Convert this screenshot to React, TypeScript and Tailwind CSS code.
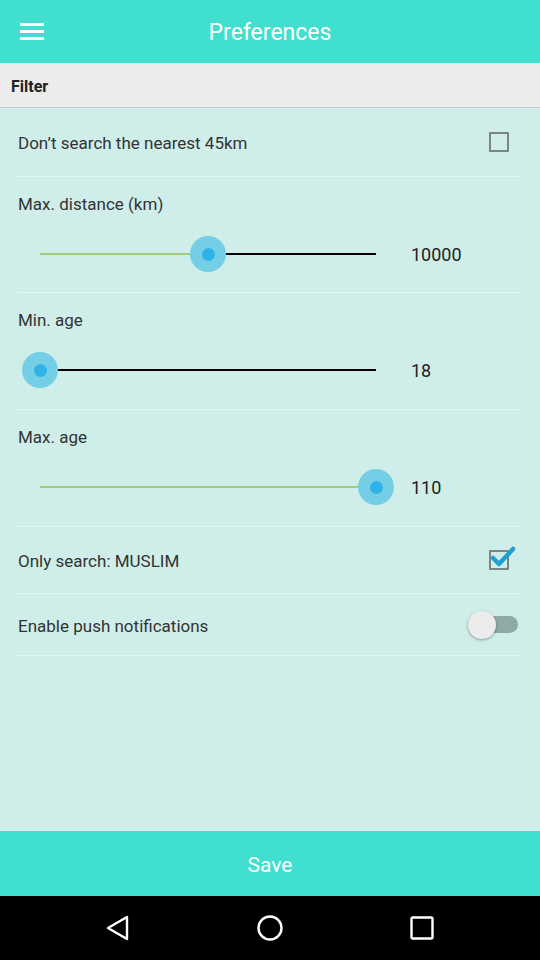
import React from "react";

const Divider = () => <div className="h-px bg-[#e3f5f2]" />;

const Checkbox = ({ checked }: { checked?: boolean }) => (
  <div className="relative w-[20px] h-[20px] border-2 border-[#7b8684] rounded-[1px]">
    {checked && (
      <svg className="absolute -top-[8px] -left-[1px]" width="26" height="26" viewBox="0 0 26 26">
        <path d="M3 14 L9 20 L23 5" fill="none" stroke="#1f9fd5" strokeWidth="4.5" strokeLinecap="round" strokeLinejoin="round" />
      </svg>
    )}
  </div>
);

const Slider = ({ label, value, pos, pb }: { label: string; value: string; pos: number; pb: string }) => (
  <div className={`pt-[17px] ${pb}`}>
    <div className="h-[21px] leading-[21px] text-[17px] text-[#333]">{label}</div>
    <div className="mt-[17px] h-[44px] flex items-center">
      <div className="relative ml-[22px] w-[336px] h-[44px]">
        <div className="absolute top-[21px] left-0 h-[2px] bg-[#9fcc7e]" style={{ width: `${pos * 100}%` }} />
        <div className="absolute top-[21px] right-0 h-[2px] bg-black" style={{ width: `${(1 - pos) * 100}%` }} />
        <div
          className="absolute top-[4px] w-[36px] h-[36px] -ml-[18px] rounded-full bg-[#74cfe6] flex items-center justify-center"
          style={{ left: `${pos * 100}%` }}
        >
          <div className="w-[13px] h-[13px] rounded-full bg-[#2db3e8]" />
        </div>
      </div>
      <div className="ml-[35px] text-[18px] text-[#222]">{value}</div>
    </div>
  </div>
);

export default function App() {
  return (
    <div className="w-[540px] h-[960px] flex flex-col bg-[#cfeeea]" style={{ fontFamily: "Roboto, 'Noto Sans', sans-serif" }}>
      <div className="h-[63px] bg-[#40dfd0] flex items-center relative">
        <div className="ml-[20px] flex flex-col gap-[4px]">
          <div className="w-[24px] h-[3px] bg-white" />
          <div className="w-[24px] h-[3px] bg-white" />
          <div className="w-[24px] h-[3px] bg-white" />
        </div>
        <div className="absolute inset-x-0 text-center text-white text-[23px] leading-[28px] pt-[3px]">Preferences</div>
      </div>

      <div className="h-[45px] bg-[#ececec] border-b border-[#c4c9c8] flex items-center pl-[11px]">
        <span className="text-[16px] font-bold text-[#222] pt-[3px]">Filter</span>
      </div>

      <div className="flex-1 mx-[17px] mr-[20px]">
        <div className="h-[68px] flex items-center justify-between pl-[1px] pr-[11px]">
          <span className="text-[17px] text-[#333] pt-[4px]">Don’t search the nearest 45km</span>
          <Checkbox />
        </div>
        <Divider />
        <div className="pl-[1px]">
          <Slider label="Max. distance (km)" value="10000" pos={0.5} pb="pb-[16px]" />
        </div>
        <Divider />
        <div className="pl-[1px]">
          <Slider label="Min. age" value="18" pos={0} pb="pb-[17px]" />
        </div>
        <Divider />
        <div className="pl-[1px]">
          <Slider label="Max. age" value="110" pos={1} pb="pb-[17px]" />
        </div>
        <Divider />
        <div className="h-[66px] flex items-center justify-between pl-[1px] pr-[11px]">
          <span className="text-[17px] text-[#333] pt-[4px]">Only search: MUSLIM</span>
          <Checkbox checked />
        </div>
        <Divider />
        <div className="h-[61px] flex items-center justify-between pl-[1px] pr-[2px]">
          <span className="text-[17px] text-[#333] pt-[4px]">Enable push notifications</span>
          <div className="relative w-[50px] h-[28px] flex items-center">
            <div className="ml-[4px] w-[46px] h-[17px] rounded-full bg-[#8fa9a5]" />
            <div className="absolute left-0 top-0 w-[28px] h-[28px] rounded-full bg-[#ececec] shadow-[0_1px_3px_rgba(0,0,0,0.35)]" />
          </div>
        </div>
        <Divider />
      </div>

      <div className="h-[65px] bg-[#40dfd0] flex items-center justify-center">
        <span className="text-white text-[21px] pt-[5px]">Save</span>
      </div>

      <div className="h-[64px] bg-black flex items-center justify-center gap-[122px]">
        <div className="w-[30px] flex justify-center">
          <svg width="26" height="28" viewBox="0 0 26 28">
            <path d="M22 3 L22 25 L3 14 Z" fill="none" stroke="white" strokeWidth="2.4" strokeLinejoin="round" />
          </svg>
        </div>
        <div className="w-[30px] flex justify-center">
          <svg width="28" height="28" viewBox="0 0 28 28">
            <circle cx="14" cy="14" r="11.5" fill="none" stroke="white" strokeWidth="2.4" />
          </svg>
        </div>
        <div className="w-[30px] flex justify-center">
          <svg width="26" height="26" viewBox="0 0 26 26">
            <rect x="2.5" y="2.5" width="21" height="21" rx="1.5" fill="none" stroke="white" strokeWidth="2.4" />
          </svg>
        </div>
      </div>
    </div>
  );
}
